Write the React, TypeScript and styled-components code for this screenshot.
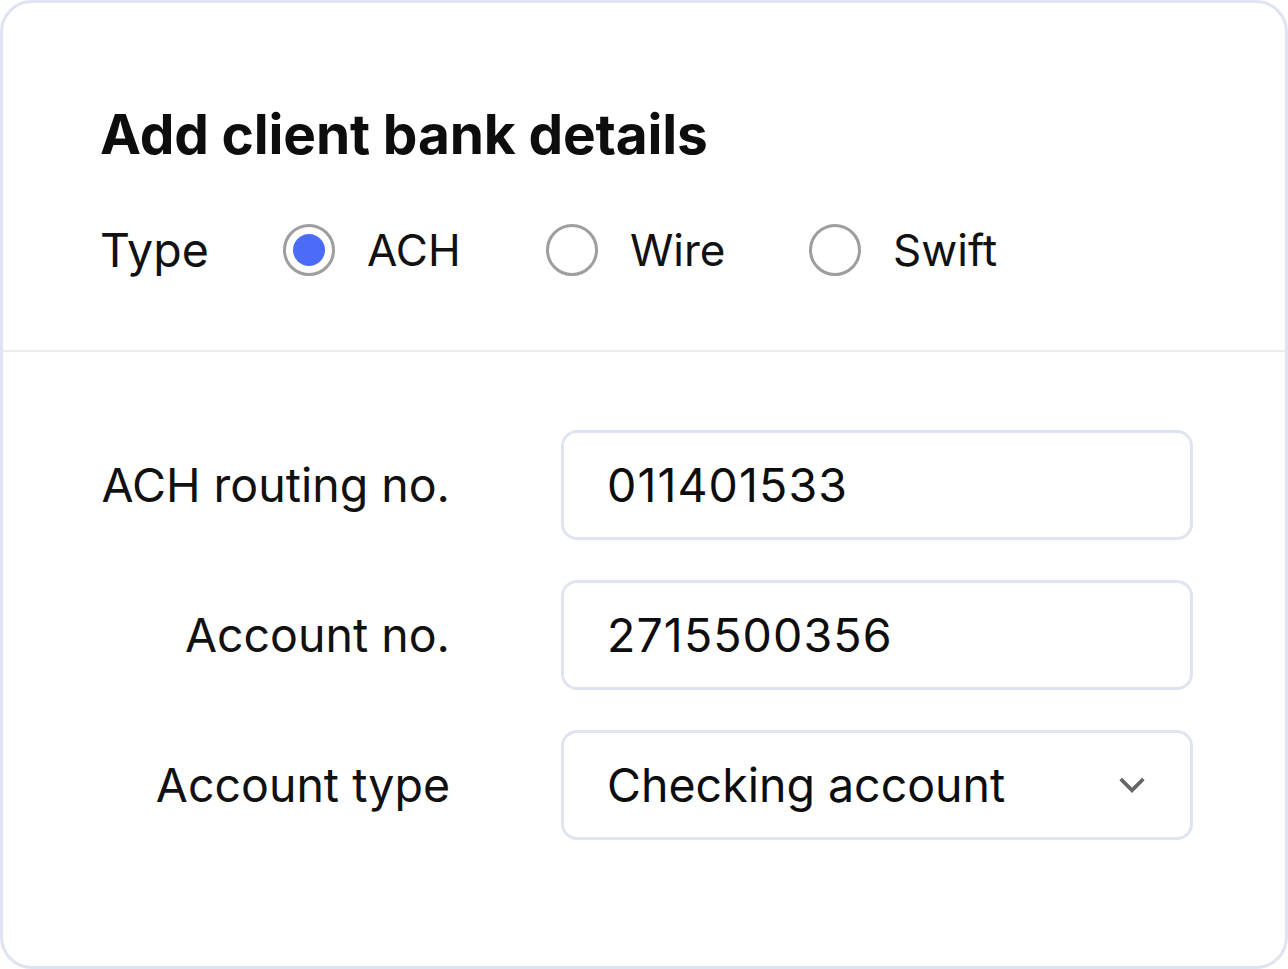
import React from "react";
import styled, { createGlobalStyle } from "styled-components";

const Global = createGlobalStyle`
  html, body { margin: 0; padding: 0; background: #ffffff; }
  body { font-family: Inter, "Noto Sans", Arial, sans-serif; color: #111111; }
  * { box-sizing: border-box; }
`;

const Card = styled.div`
  width: 1288px;
  height: 969px;
  border: 3px solid #dfe4f1;
  border-radius: 32px;
  background: #ffffff;
  display: flex;
  flex-direction: column;
  overflow: hidden;
`;

const Header = styled.div`
  padding: 99px 0 0 97px;
  height: 349px;
  border-bottom: 2px solid #ececec;
  display: flex;
  flex-direction: column;
`;

const Title = styled.h1`
  margin: 0;
  font-size: 55px;
  line-height: 64px;
  font-weight: 700;
  letter-spacing: -0.15px;
  color: #0d0d0d;
`;

const TypeRow = styled.div`
  margin-top: 56px;
  display: flex;
  align-items: center;
  height: 56px;
`;

const TypeLabel = styled.span`
  font-size: 46.5px;
  width: 183px;
`;

const RadioItem = styled.label`
  display: flex;
  align-items: center;
  width: 263px;
  gap: 32px;
  font-size: 44px;
  cursor: pointer;
`;

const RadioCircle = styled.span<{ $checked?: boolean }>`
  width: 52px;
  height: 52px;
  border-radius: 50%;
  border: 3px solid #9e9e9e;
  display: flex;
  align-items: center;
  justify-content: center;
  flex-shrink: 0;
  &::after {
    content: "";
    width: 32px;
    height: 32px;
    border-radius: 50%;
    background: ${(p) => (p.$checked ? "#4a6cf6" : "transparent")};
  }
`;

const Body = styled.div`
  padding: 78px 92px 0 97px;
  display: flex;
  flex-direction: column;
  gap: 40px;
`;

const FieldRow = styled.div`
  display: grid;
  grid-template-columns: 350px 632px;
  column-gap: 111px;
  align-items: center;
`;

const FieldLabel = styled.span`
  text-align: right;
  font-size: 46.5px;
`;

const Field = styled.div<{ $numeric?: boolean }>`
  height: 110px;
  border: 3px solid #dfe4f1;
  border-radius: 16px;
  display: flex;
  align-items: center;
  justify-content: space-between;
  padding: 0 42px 0 43px;
  font-size: 46.5px;
  letter-spacing: ${(p) => (p.$numeric ? "1.1px" : "0")};
  color: #0d0d0d;
`;

const Chevron = () => (
  <svg width="32" height="32" viewBox="0 0 24 24" fill="none" stroke="#666666" strokeWidth="2.8" strokeLinecap="square">
    <polyline points="4.5,8.5 12,16 19.5,8.5" />
  </svg>
);

export default function App() {
  return (
    <>
      <Global />
      <Card>
        <Header>
          <Title>Add client bank details</Title>
          <TypeRow>
            <TypeLabel>Type</TypeLabel>
            <RadioItem><RadioCircle $checked />ACH</RadioItem>
            <RadioItem><RadioCircle />Wire</RadioItem>
            <RadioItem><RadioCircle />Swift</RadioItem>
          </TypeRow>
        </Header>
        <Body>
          <FieldRow>
            <FieldLabel>ACH routing no.</FieldLabel>
            <Field $numeric>011401533</Field>
          </FieldRow>
          <FieldRow>
            <FieldLabel>Account no.</FieldLabel>
            <Field $numeric>2715500356</Field>
          </FieldRow>
          <FieldRow>
            <FieldLabel>Account type</FieldLabel>
            <Field>
              Checking account
              <Chevron />
            </Field>
          </FieldRow>
        </Body>
      </Card>
    </>
  );
}
